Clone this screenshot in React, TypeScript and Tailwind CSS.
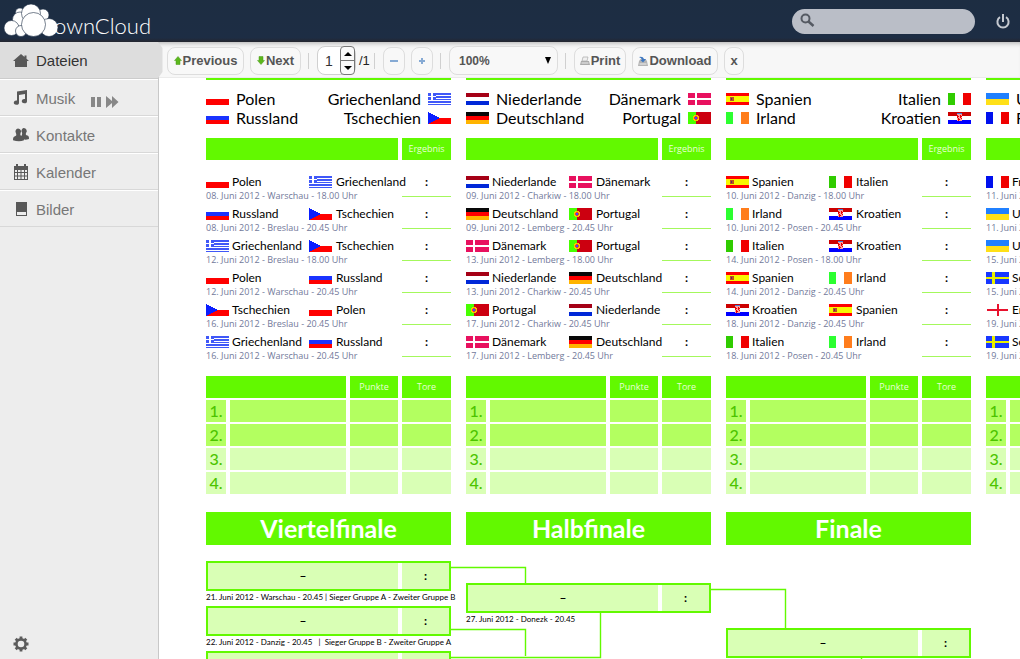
import type { ReactNode } from "react";

type Country =
  | "Polen" | "Russland" | "Griechenland" | "Tschechien"
  | "Niederlande" | "Deutschland" | "Dänemark" | "Portugal"
  | "Spanien" | "Irland" | "Italien" | "Kroatien"
  | "Ukraine" | "Frankreich" | "Schweden" | "England";

type Match = { home: Country; away: Country; info: string };
type Group = { left: Country[]; right: Country[]; matches: Match[] };

const groups: Group[] = [
  {
    left: ["Polen", "Russland"],
    right: ["Griechenland", "Tschechien"],
    matches: [
      { home: "Polen", away: "Griechenland", info: "08. Juni 2012 - Warschau - 18.00 Uhr" },
      { home: "Russland", away: "Tschechien", info: "08. Juni 2012 - Breslau - 20.45 Uhr" },
      { home: "Griechenland", away: "Tschechien", info: "12. Juni 2012 - Breslau - 18.00 Uhr" },
      { home: "Polen", away: "Russland", info: "12. Juni 2012 - Warschau - 20.45 Uhr" },
      { home: "Tschechien", away: "Polen", info: "16. Juni 2012 - Breslau - 20.45 Uhr" },
      { home: "Griechenland", away: "Russland", info: "16. Juni 2012 - Warschau - 20.45 Uhr" },
    ],
  },
  {
    left: ["Niederlande", "Deutschland"],
    right: ["Dänemark", "Portugal"],
    matches: [
      { home: "Niederlande", away: "Dänemark", info: "09. Juni 2012 - Charkiw - 18.00 Uhr" },
      { home: "Deutschland", away: "Portugal", info: "09. Juni 2012 - Lemberg - 20.45 Uhr" },
      { home: "Dänemark", away: "Portugal", info: "13. Juni 2012 - Lemberg - 18.00 Uhr" },
      { home: "Niederlande", away: "Deutschland", info: "13. Juni 2012 - Charkiw - 20.45 Uhr" },
      { home: "Portugal", away: "Niederlande", info: "17. Juni 2012 - Charkiw - 20.45 Uhr" },
      { home: "Dänemark", away: "Deutschland", info: "17. Juni 2012 - Lemberg - 20.45 Uhr" },
    ],
  },
  {
    left: ["Spanien", "Irland"],
    right: ["Italien", "Kroatien"],
    matches: [
      { home: "Spanien", away: "Italien", info: "10. Juni 2012 - Danzig - 18.00 Uhr" },
      { home: "Irland", away: "Kroatien", info: "10. Juni 2012 - Posen - 20.45 Uhr" },
      { home: "Italien", away: "Kroatien", info: "14. Juni 2012 - Posen - 18.00 Uhr" },
      { home: "Spanien", away: "Irland", info: "14. Juni 2012 - Danzig - 20.45 Uhr" },
      { home: "Kroatien", away: "Spanien", info: "18. Juni 2012 - Danzig - 20.45 Uhr" },
      { home: "Italien", away: "Irland", info: "18. Juni 2012 - Posen - 20.45 Uhr" },
    ],
  },
  {
    left: ["Ukraine", "Frankreich"],
    right: ["Schweden", "England"],
    matches: [
      { home: "Frankreich", away: "England", info: "11. Juni 2012 - Donezk - 18.00 Uhr" },
      { home: "Ukraine", away: "Schweden", info: "11. Juni 2012 - Kiew - 20.45 Uhr" },
      { home: "Ukraine", away: "Frankreich", info: "15. Juni 2012 - Donezk - 18.00 Uhr" },
      { home: "Schweden", away: "England", info: "15. Juni 2012 - Kiew - 20.45 Uhr" },
      { home: "England", away: "Ukraine", info: "19. Juni 2012 - Donezk - 20.45 Uhr" },
      { home: "Schweden", away: "Frankreich", info: "19. Juni 2012 - Kiew - 20.45 Uhr" },
    ],
  },
];

function horizontal(a: string, b: string, c: string) {
  return (
    <>
      <rect width="23" height="4" fill={a} />
      <rect y="4" width="23" height="4" fill={b} />
      <rect y="8" width="23" height="4" fill={c} />
    </>
  );
}

function vertical(a: string, b: string, c: string) {
  return (
    <>
      <rect width="7" height="12" fill={a} />
      <rect x="7" width="9" height="12" fill={b} />
      <rect x="15" width="8" height="12" fill={c} />
    </>
  );
}

const flags: Record<Country, ReactNode> = {
  Polen: <rect y="6" width="23" height="6" fill="#ff0000" />,
  Russland: horizontal("#ffffff", "#1a33ff", "#ff0000"),
  Griechenland: (
    <>
      <rect width="23" height="12" fill="#4058f8" />
      <path d="M8 2.5h15M8 5h15M0 7.6h23M0 10.2h23" stroke="#fff" strokeWidth="1" />
      <path d="M4 0v6.5M0 3.2h8" stroke="#fff" strokeWidth="1.2" />
    </>
  ),
  Tschechien: (
    <>
      <rect y="6" width="23" height="6" fill="#ff0000" />
      <path d="M0 0l12 6-12 6z" fill="#0a1eff" />
    </>
  ),
  Niederlande: horizontal("#a50016", "#ffffff", "#0028d8"),
  Deutschland: horizontal("#080808", "#ff0000", "#ffb400"),
  Dänemark: (
    <>
      <rect width="23" height="12" fill="#e8115f" />
      <path d="M8 0v12M0 6h23" stroke="#fff" strokeWidth="1.3" />
    </>
  ),
  Portugal: (
    <>
      <rect width="8" height="12" fill="#48ff00" />
      <rect x="8" width="15" height="12" fill="#cc0010" />
      <circle cx="8" cy="6" r="2.4" fill="#e33" stroke="#f5c800" strokeWidth="1.1" />
      <rect x="7" y="5" width="2" height="2" fill="#3a4cff" />
    </>
  ),
  Spanien: (
    <>
      <rect width="23" height="12" fill="#ff0000" />
      <rect y="3" width="23" height="6" fill="#f8f800" />
      <rect x="4" y="4" width="4" height="4" fill="#c05020" />
      <rect x="5" y="5" width="1" height="2" fill="#5a3060" />
    </>
  ),
  Irland: vertical("#2cff30", "#ffffff", "#ff7d1c"),
  Italien: vertical("#30cc00", "#ffffff", "#f00000"),
  Kroatien: (
    <>
      {horizontal("#cc0000", "#ffffff", "#0000ff")}
      <rect x="9" y="2" width="5" height="7" fill="#ff9c9c" />
      <path d="M9 3h1v1h1v1h-1v1H9zM12 3h1v1h1v1h-1v1h-1zM10 6h1v1h1v1h-1v1h-1zM13 6h1v1h-1z" fill="#e00" />
      <rect x="9" y="1" width="5" height="1" fill="#4078d0" />
    </>
  ),
  Ukraine: (
    <>
      <rect width="23" height="6" fill="#2080ff" />
      <rect y="6" width="23" height="6" fill="#ffe018" />
    </>
  ),
  Frankreich: vertical("#0010ee", "#ffffff", "#f00000"),
  Schweden: (
    <>
      <rect width="23" height="12" fill="#1838ff" />
      <path d="M7.5 0v12M0 6h23" stroke="#e8f000" strokeWidth="2.4" />
    </>
  ),
  England: <path d="M11.5 0v12M1 6h21" stroke="#e8112d" strokeWidth="2" />,
};

function Flag({ country }: { country: Country }) {
  return (
    <svg viewBox="0 0 23 12" width="23" height="12" className="shrink-0" shapeRendering="crispEdges" aria-hidden="true">
      {flags[country]}
    </svg>
  );
}

function GroupColumn({ group }: { group: Group }) {
  return (
    <section className="w-[245px] shrink-0">
      <div className="h-0.5 bg-[#62f900]" />

      {/* Teams */}
      <div className="flex justify-between pt-[9px] text-base leading-[19px] text-black">
        <ul>
          {group.left.map((c) => (
            <li key={c} className="flex items-center gap-[7px]">
              <Flag country={c} />
              {c}
            </li>
          ))}
        </ul>
        <ul>
          {group.right.map((c) => (
            <li key={c} className="flex items-center justify-end gap-[7px]">
              {c}
              <Flag country={c} />
            </li>
          ))}
        </ul>
      </div>

      <div className="mt-[11px] flex h-[22px] gap-1 font-['Open_Sans'] text-[9px] text-[#e8ffd8]">
        <div className="flex-1 bg-[#62f900]" />
        <div className="flex w-[49px] items-center justify-center bg-[#62f900]">Ergebnis</div>
      </div>

      {/* Fixtures */}
      <ul className="mt-[13px]">
        {group.matches.map((m) => (
          <li key={m.info} className="flex h-8">
            <div className="w-[196px] shrink-0">
              <div className="flex h-[17px] items-center text-xs leading-[17px] whitespace-nowrap text-black">
                <div className="flex w-[103px] shrink-0 items-center gap-[3px]">
                  <Flag country={m.home} />
                  {m.home}
                </div>
                <div className="flex items-center gap-1">
                  <Flag country={m.away} />
                  {m.away}
                </div>
              </div>
              <p className="font-['Open_Sans'] text-[9px] leading-3 text-[#72799a]">{m.info}</p>
            </div>
            <div className="h-6 flex-1 border-b border-[#a4f85c] text-center text-xs leading-[17px] font-bold">:</div>
          </li>
        ))}
      </ul>

      {/* Standings */}
      <table className="mt-[11px] w-full table-fixed border-separate border-spacing-0 text-left">
        <colgroup>
          <col className="w-5" />
          <col className="w-[120px]" />
          <col className="w-[52px]" />
          <col className="w-[53px]" />
        </colgroup>
        <thead>
          <tr className="h-6 font-['Open_Sans'] text-[9px] text-[#e8ffd8] *:border-b-2 *:border-white *:bg-[#62f900] *:bg-clip-padding *:p-0 *:font-normal">
            <th colSpan={2} aria-label="Team" />
            <th className="border-l-4 text-center">Punkte</th>
            <th className="border-l-4 text-center">Tore</th>
          </tr>
        </thead>
        <tbody className="text-base leading-[22px] font-medium text-[#4cc400]">
          {[1, 2, 3, 4].map((n) => (
            <tr
              key={n}
              className={
                n < 3
                  ? "h-6 *:border-b-2 *:border-white *:bg-[#b3ff60] *:bg-clip-padding *:p-0"
                  : "h-6 *:border-b-2 *:border-white *:bg-[#d9ffb5] *:bg-clip-padding *:p-0"
              }
            >
              <td className="text-center">{n}.</td>
              <td className="border-l-4" />
              <td className="border-l-4" />
              <td className="border-l-4" />
            </tr>
          ))}
        </tbody>
      </table>
    </section>
  );
}

function KnockoutMatch({ info }: { info?: string }) {
  return (
    <div className="h-[45px]">
      <div className="flex h-[30px] border-2 border-[#62f900] bg-[#d9ffb5] text-center text-xs leading-[26px] font-bold text-black">
        <span className="flex-1">–</span>
        <span className="w-[51px] border-l-4 border-white">:</span>
      </div>
      <p className="text-[8px] leading-3 whitespace-pre text-black">{info}</p>
    </div>
  );
}

function RoundTitle({ children }: { children: ReactNode }) {
  return (
    <h2 className="h-[33px] bg-[#62f900] text-center text-[25px] leading-[33px] font-bold text-white">{children}</h2>
  );
}

function Knockout() {
  return (
    <div className="relative mt-4 flex gap-[15px]">
      {/* lines between the rounds */}
      <svg className="absolute top-0 left-0" width="780" height="200" fill="none" stroke="#62f900" aria-hidden="true">
        <path d="M245 55.5h74.5V72M245 117.5h74.5V144M245 145.5h149.5V101M505 77.5h74.5V117M655.5 146v40" strokeWidth="1.4" />
      </svg>
      <div className="relative w-[245px]">
        <RoundTitle>Viertelfinale</RoundTitle>
        <div className="pt-4">
          <KnockoutMatch info="21. Juni 2012 - Warschau - 20.45 | Sieger Gruppe A - Zweiter Gruppe B" />
          <KnockoutMatch info="22. Juni 2012 - Danzig - 20.45   |  Sieger Gruppe B - Zweiter Gruppe A" />
          <KnockoutMatch />
        </div>
      </div>
      <div className="relative w-[245px]">
        <RoundTitle>Halbfinale</RoundTitle>
        <div className="pt-[38px]">
          <KnockoutMatch info="27. Juni 2012 - Donezk - 20.45" />
        </div>
      </div>
      <div className="relative w-[245px]">
        <RoundTitle>Finale</RoundTitle>
        <div className="pt-[83px]">
          <KnockoutMatch />
        </div>
      </div>
    </div>
  );
}

function Logo() {
  return (
    <a href="#" className="flex items-end" aria-label="ownCloud">
      <svg width="54" height="34" viewBox="0 0 54 34" fill="#fff" stroke="#1d2d44" strokeWidth=".6" aria-hidden="true">
        <circle cx="16" cy="8.500" r="4.500" />
        <circle cx="39" cy="11" r="6" />
        <circle cx="16" cy="15.500" r="7.500" />
        <circle cx="7.500" cy="24" r="7.500" />
        <circle cx="27" cy="9.500" r="9.500" />
        <circle cx="17" cy="27" r="5.500" />
        <circle cx="45" cy="23.500" r="9" />
        <circle cx="29.500" cy="20.500" r="12" />
      </svg>
      <span className="-ml-1 font-[Lato] text-[22px] leading-6 font-light text-white">ownCloud</span>
    </a>
  );
}

const navItems = [
  {
    label: "Dateien",
    icon: <path d="M8 1L0 8h2v6h12V8h2l-2.500-2.200V2.500h-2v1.600z" />,
  },
  {
    label: "Musik",
    icon: (
      <path d="M4 1.500L14 0v11a2.600 2.200 0 1 1-2-2V4L6 5v7.500a2.600 2.200 0 1 1-2-2z" />
    ),
  },
  {
    label: "Kontakte",
    icon: (
      <path d="M10.500 1a3 3 0 0 1 2.500 5c-.6 1.600 0 2 1.500 2.600 1.300.6 1.500 1.400 1.500 3.400-2 .8-4 .8-5 .6-.3-1.700-2-2.400-3-3 .5-1 1.500-2 1-4A3 3 0 0 1 10.500 1zM5 1.500a3 3 0 0 1 2.500 4.700C7 8 7.500 8.600 9 9.200c1.600.6 2 1.600 2 4-3 1.300-7 1.300-11 0 0-2.400.4-3.400 2-4 1.500-.6 1.500-1.200 1-3A3 3 0 0 1 5 1.500z" />
    ),
  },
  {
    label: "Kalender",
    icon: (
      <path
        fillRule="evenodd"
        d="M3 0h2v2h6V0h2v2h2v14H1V2h2zM2 6v2h2V6zm3 0v2h2.500V6zm3.500 0v2H11V6zM12 6v2h2V6zM2 9v2.500h2V9zm3 0v2.500h2.500V9zm3.500 0v2.500H11V9zM12 9v2.500h2V9zM2 12.500V15h2v-2.500zm3 0V15h2.500v-2.500zm3.500 0V15H11v-2.500zm3.500 0V15h2v-2.500z"
      />
    ),
  },
  {
    label: "Bilder",
    icon: <path fillRule="evenodd" d="M3 1h11v14H3zm1 10v3h9v-3z" />,
  },
];

function Sidebar() {
  return (
    <nav className="flex w-[159px] shrink-0 flex-col border-r border-[#c8c8c8] bg-[#ededed]">
      <ul>
        {navItems.map((item, i) => (
          <li
            key={item.label}
            className={
              i === 0
                ? "relative flex h-[37px] items-center border-b border-[#cccccc] bg-[#dddddd] pt-[3px] text-[#333]"
                : "flex h-[37px] items-center border-t border-b border-t-white border-b-[#d8d8d8] pt-[3px] text-[#777]"
            }
          >
            <a href="#" className="flex items-center gap-[7px] pl-[13px] text-[15px]">
              <svg width="16" height="16" viewBox="0 0 16 16" fill="#585858" className="-mt-0.5" aria-hidden="true">
                {item.icon}
              </svg>
              {item.label}
            </a>
            {i === 0 && (
              <svg className="absolute top-0 left-[158px] z-10" width="5" height="36" aria-hidden="true">
                <path d="M0 0l4.500 6v24L0 36z" fill="#dddddd" />
              </svg>
            )}
            {item.label === "Musik" && (
              <div className="ml-4 flex gap-1 pt-1.5">
                <button type="button" aria-label="Pause">
                  <svg width="11" height="11" fill="#888">
                    <path d="M0 0h4v10H0zM6 0h4v10H6z" />
                  </svg>
                </button>
                <button type="button" aria-label="Next track">
                  <svg width="13" height="12" fill="#888">
                    <path d="M0 0l6 5V0l6.500 6L6 12V7l-6 5z" />
                  </svg>
                </button>
              </div>
            )}
          </li>
        ))}
      </ul>
      <button type="button" aria-label="Settings" className="mt-auto mb-[7px] ml-[13px] w-4">
        <svg width="16" height="16" viewBox="0 0 16 16" fill="none" stroke="#5c5c5c" aria-hidden="true">
          <circle cx="8" cy="8" r="4.600" strokeWidth="2.600" />
          <path
            d="M8 .5V3M8 13v2.500M.5 8H3M13 8h2.500M2.700 2.700l1.800 1.800M11.500 11.500l1.800 1.800M2.700 13.300l1.800-1.800M11.500 4.500l1.800-1.800"
            strokeWidth="2.800"
          />
        </svg>
      </button>
    </nav>
  );
}

const toolButton =
  "flex h-7 items-center justify-center gap-px rounded-lg border border-[#dddddd] bg-[#f8f8f8] text-[13px] font-bold text-[#555]";

function Separator() {
  return <span className="h-4 w-px bg-[#d0d0d0]" />;
}

function Toolbar() {
  return (
    <div className="flex h-9 shrink-0 items-center border-b border-[#ebebeb] bg-[#f7f7f7] pt-0.5 pl-2 shadow-[inset_0_5px_5px_-4px_#aaa]">
      <button type="button" className={`${toolButton} w-[77px]`}>
        <svg width="8" height="9" aria-hidden="true">
          <path d="M4 .5L7.500 4.500H6V8.500H2V4.500H.5z" fill="#5cb81c" stroke="#4a9a1a" strokeWidth=".5" />
        </svg>
        Previous
      </button>
      <button type="button" className={`${toolButton} ml-1.5 w-[51px]`}>
        <svg width="8" height="9" aria-hidden="true">
          <path d="M4 8.500L.5 4.500H2V.5h4v4h1.500z" fill="#5cb81c" stroke="#4a9a1a" strokeWidth=".5" />
        </svg>
        Next
      </button>
      <span className="w-[7px]" />
      <Separator />
      <div className="ml-2 flex h-[29px] w-[39px] rounded-lg border border-[#d0d0d0] bg-white">
        <input
          type="text"
          aria-label="Page"
          defaultValue="1"
          className="w-[22px] bg-transparent pl-[7px] text-sm text-[#333] outline-none"
        />
        <div className="-my-px flex w-4 flex-col rounded border border-[#777] bg-[#fafafa]">
          <button type="button" aria-label="Page up" className="flex flex-1 items-center justify-center border-b border-[#777]">
            <svg width="8" height="4">
              <path d="M4 0l4 4H0z" />
            </svg>
          </button>
          <button type="button" aria-label="Page down" className="flex flex-1 items-center justify-center">
            <svg width="8" height="4">
              <path d="M0 0h8L4 4z" />
            </svg>
          </button>
        </div>
      </div>
      <span className="w-[18px] pl-[3px] text-[13px] text-[#222]">/1</span>
      <Separator />
      <button type="button" aria-label="Zoom out" className={`${toolButton} ml-2 w-[22px]`}>
        <svg width="8" height="8" aria-hidden="true">
          <path d="M0 3h8v2H0z" fill="#86aad4" />
        </svg>
      </button>
      <button type="button" aria-label="Zoom in" className={`${toolButton} ml-1.5 w-[22px]`}>
        <svg width="8" height="8" aria-hidden="true">
          <path d="M1 3h2V1h2v2h2v2H5v2H3V5H1z" fill="#86aad4" />
        </svg>
      </button>
      <span className="w-[7px]" />
      <Separator />
      <div className="relative ml-2 w-[109px]">
        <select
          aria-label="Zoom"
          defaultValue="100%"
          className="h-[29px] w-full appearance-none rounded-lg border border-[#dddddd] bg-[#f8f8f8] pl-[9px] text-xs font-bold text-[#555]"
        >
          <option>50%</option>
          <option>100%</option>
          <option>200%</option>
        </select>
        <svg className="pointer-events-none absolute top-[11px] right-1.5" width="8" height="7" aria-hidden="true">
          <path d="M1 0h6L4 7z" />
        </svg>
      </div>
      <span className="w-[7px]" />
      <Separator />
      <button type="button" className={`${toolButton} ml-2 w-[52px]`}>
        <svg width="10" height="10" aria-hidden="true">
          <path d="M3 1h5l-1 4H2z" fill="#f0f0f0" stroke="#aaa" strokeWidth=".7" />
          <path d="M1 5h8l1 4H0z" fill="#aaa" />
          <path d="M1.500 7h7" stroke="#eee" />
        </svg>
        Print
      </button>
      <button type="button" className={`${toolButton} ml-1.5 w-[86px]`}>
        <svg width="10" height="10" aria-hidden="true">
          <path d="M1 5l1.500-2h5L9 5l1 5H0z" fill="#b4b4b4" />
          <path d="M1.500 8h7" stroke="#eee" />
          <path d="M1 1q4-1 5 2h2L5 6.500 2.500 4H4Q3.500 2 1 1z" fill="#3f78c0" />
        </svg>
        Download
      </button>
      <button type="button" className={`${toolButton} ml-1.5 w-5`}>
        x
      </button>
    </div>
  );
}

export default function App() {
  return (
    <div className="flex h-screen flex-col overflow-hidden bg-white font-['Liberation_Sans',Arial,sans-serif]">
      <header className="flex h-[42px] shrink-0 items-center justify-between bg-linear-to-b from-[#1d2d42] via-[#1d2d44] via-90% to-[#24262f] pr-2.5 pl-1">
        <Logo />
        <div className="flex items-center gap-[21px]">
          <div className="relative">
            <input
              type="search"
              aria-label="Search"
              className="h-[25px] w-[183px] rounded-full bg-[#babec7] pr-3 pl-7 text-sm text-[#333] outline-none"
            />
            <svg
              className="absolute top-1 left-2"
              width="15"
              height="15"
              fill="none"
              stroke="#555a63"
              strokeWidth="2"
              aria-hidden="true"
            >
              <circle cx="5.500" cy="5.500" r="4" />
              <path d="M8.500 8.500l5 4.500" strokeWidth="2.500" />
            </svg>
          </div>
          <button type="button" aria-label="Log out">
            <svg width="14" height="15" fill="none" stroke="#c5c9d0" strokeWidth="2" aria-hidden="true">
              <path d="M4 3.200a5.600 5.600 0 1 0 6 0M7 0v8" />
            </svg>
          </button>
        </div>
      </header>

      <div className="flex min-h-0 flex-1">
        <Sidebar />
        <main className="flex min-w-0 flex-1 flex-col">
          <Toolbar />
          <div className="min-h-0 flex-1 overflow-hidden pl-[47px] font-[Lato,'Open_Sans',sans-serif]">
            <div className="flex gap-[15px]">
              {groups.map((g) => (
                <GroupColumn key={g.left[0]} group={g} />
              ))}
            </div>
            <Knockout />
          </div>
        </main>
      </div>
    </div>
  );
}
